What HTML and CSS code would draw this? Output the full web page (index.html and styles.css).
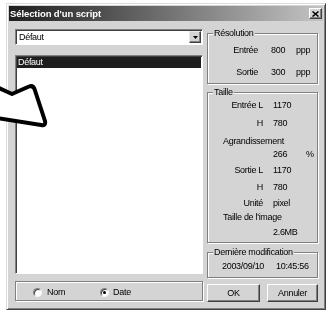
FILE: index.html
```html
<!DOCTYPE html>
<html lang="fr">
<head>
<meta charset="utf-8">
<title>Sélection d'un script</title>
<link rel="stylesheet" href="styles.css">
</head>
<body>
<div class="dialog">
  <div class="titlebar">
    <span class="title">Sélection d'un script</span>
    <span class="close"><svg width="7" height="6" viewBox="0 0 7 6"><path d="M0.5 0.5 L6.5 5.5 M6.5 0.5 L0.5 5.5" stroke="#000" stroke-width="1.5" fill="none"/></svg></span>
  </div>
  <div class="body">
    <div class="left">
      <div class="combo">
        <span class="combo-text">Défaut</span>
        <span class="drop"><svg width="5" height="3" viewBox="0 0 5 3"><path d="M0 0 H5 L2.5 3 Z" fill="#000"/></svg></span>
      </div>
      <div class="list">
        <div class="item sel">Défaut</div>
      </div>
      <div class="group radios">
        <span class="radio"><span class="rb"></span>Nom</span>
        <span class="radio"><span class="rb on"></span>Date</span>
      </div>
    </div>
    <div class="right">
      <div class="group res">
        <span class="legend">Résolution</span>
        <div class="row r1"><span class="lbl">Entrée</span><span class="val">800</span><span class="unit">ppp</span></div>
        <div class="row r2"><span class="lbl">Sortie</span><span class="val">300</span><span class="unit">ppp</span></div>
      </div>
      <div class="group taille">
        <span class="legend">Taille</span>
        <div class="row t1"><span class="lbl">Entrée L</span><span class="val">1170</span></div>
        <div class="row t2"><span class="lbl">H</span><span class="val">780</span></div>
        <div class="row t3 wide">Agrandissement</div>
        <div class="row t4"><span class="lbl"></span><span class="val">266</span><span class="unit">%</span></div>
        <div class="row t5"><span class="lbl">Sortie L</span><span class="val">1170</span></div>
        <div class="row t6"><span class="lbl">H</span><span class="val">780</span></div>
        <div class="row t7"><span class="lbl">Unité</span><span class="val">pixel</span></div>
        <div class="row t8 wide">Taille de l'image</div>
        <div class="row t9"><span class="lbl"></span><span class="val">2.6MB</span></div>
      </div>
      <div class="group modif">
        <span class="legend">Dernière modification</span>
        <div class="row m1"><span class="date">2003/09/10</span><span class="time">10:45:56</span></div>
      </div>
      <div class="buttons">
        <button class="btn ok">OK</button>
        <button class="btn cancel">Annuler</button>
      </div>
    </div>
  </div>
</div>
<svg class="arrow" width="60" height="140" viewBox="0 0 60 140">
  <path d="M-10 84 L12 94 L29 86.5 Q33 85 34.5 89 L45 121 Q46 126 41 125 L-10 117 Z" fill="#fff" stroke="#000" stroke-width="4" stroke-linejoin="round"/>
</svg>
</body>
</html>
```

FILE: styles.css
```css
html, body {
  margin: 0;
  padding: 0;
  background: #fff;
}
body {
  font-family: "Liberation Sans", Arial, sans-serif;
  font-size: 9px;
  letter-spacing: -0.3px;
  color: #000;
  position: relative;
}
.dialog {
  margin: 3px 0 0 6px;
  width: 320px;
  height: 307px;
  box-sizing: border-box;
  background: #d4d4d4;
  border: 1px solid;
  border-color: #dcdcdc #404040 #404040 #dcdcdc;
  box-shadow: inset 1px 1px #fff, inset -1px -1px #808080;
  padding: 2px;
  display: flex;
  flex-direction: column;
  filter: grayscale(1);
}
.titlebar {
  height: 15px;
  flex: none;
  background: linear-gradient(90deg, #1e1e1e, #c4c4c4);
  display: flex;
  align-items: center;
  justify-content: space-between;
  padding: 0 1px 0 1px;
}
.title {
  color: #fff;
  font-weight: bold;
  font-size: 9.5px;
  letter-spacing: -0.1px;
}
.close {
  width: 13px;
  height: 11px;
  box-sizing: border-box;
  background: #d4d4d4;
  border: 1px solid;
  border-color: #fff #404040 #404040 #fff;
  box-shadow: inset -1px -1px #808080;
  display: flex;
  align-items: center;
  justify-content: center;
}
.body {
  display: flex;
  gap: 4px;
  padding: 7px 0 0 6px;
}
.left {
  width: 188px;
  display: flex;
  flex-direction: column;
}
.right {
  width: 111px;
  display: flex;
  flex-direction: column;
}
.combo {
  margin-top: 1px;
  height: 16px;
  box-sizing: border-box;
  background: #fff;
  border: 1px solid;
  border-color: #808080 #fff #fff #808080;
  box-shadow: inset 1px 1px #404040;
  padding: 1px;
  display: flex;
  align-items: center;
}
.combo-text {
  flex: 1;
  padding-left: 2px;
  line-height: 12px;
}
.drop {
  width: 12px;
  height: 12px;
  box-sizing: border-box;
  background: #d4d4d4;
  border: 1px solid;
  border-color: #e8e8e8 #404040 #404040 #e8e8e8;
  box-shadow: inset -1px -1px #808080;
  display: flex;
  align-items: center;
  justify-content: center;
}
.list {
  margin-top: 10px;
  height: 219px;
  box-sizing: border-box;
  background: #fff;
  border: 1px solid;
  border-color: #808080 #fff #fff #808080;
  box-shadow: inset 1px 1px #404040;
  padding: 1px 1px 0 1px;
}
.item {
  height: 11px;
  line-height: 11px;
  padding-left: 1px;
}
.item.sel {
  background: #1e1e1e;
  color: #fff;
}
.group {
  border: 1px solid #808080;
  box-shadow: inset 1px 1px #fff, 1px 1px 0 #fff;
}
.legend {
  display: block;
  width: fit-content;
  margin: -6px 0 0 5px;
  padding: 0 1px;
  height: 11px;
  line-height: 11px;
  background: #d4d4d4;
}
.radios {
  margin-top: 7px;
  height: 20px;
  box-sizing: border-box;
  display: flex;
  align-items: center;
  padding: 2px 0 0 17px;
}
.radio {
  display: flex;
  align-items: center;
  line-height: 12px;
}
.radio + .radio {
  margin-left: 35px;
}
.rb {
  width: 9px;
  height: 9px;
  box-sizing: border-box;
  border-radius: 50%;
  background: #fff;
  border: 1px solid;
  border-color: #808080 #f4f4f4 #f4f4f4 #808080;
  box-shadow: inset 1px 1px #404040;
  margin-right: 5px;
  display: flex;
  align-items: center;
  justify-content: center;
}
.radio:last-child .rb {
  margin-right: 4px;
}
.rb.on::after {
  content: "";
  width: 3px;
  height: 3px;
  border-radius: 50%;
  background: #000;
}
.row {
  display: flex;
  height: 12px;
  line-height: 12px;
  white-space: nowrap;
}
.res {
  margin-top: 5px;
  padding-bottom: 5px;
}
.res .r1 { margin-top: 5px; }
.res .r2 { margin-top: 10px; }
.res .lbl { width: 50px; text-align: right; }
.res .val { margin-left: 13px; width: 25px; }
.taille {
  margin-top: 8px;
  padding-bottom: 4px;
}
.taille .lbl { width: 55px; text-align: right; }
.taille .val { margin-left: 10px; width: 33px; }
.taille .wide { padding-left: 15px; }
.t1 { margin-top: 1px; }
.t2 { margin-top: 6px; }
.t3 { margin-top: 6px; }
.t4 { margin-top: 1px; }
.t5 { margin-top: 4px; }
.t6 { margin-top: 5px; }
.t7 { margin-top: 4px; }
.t8 { margin-top: 2px; }
.t9 { margin-top: 3px; }
.modif {
  margin-top: 9px;
  padding-bottom: 5px;
}
.m1 {
  margin-top: 2px;
  padding-left: 14px;
}
.date { width: 54px; }
.buttons {
  display: flex;
  gap: 7px;
  margin-top: 6px;
}
.btn {
  height: 18px;
  padding: 0;
  margin: 0;
  font-family: inherit;
  font-size: 9px;
  letter-spacing: -0.3px;
  color: #000;
  background: #d4d4d4;
  border: 1px solid;
  border-color: #fff #404040 #404040 #fff;
  box-shadow: inset -1px -1px #808080;
}
.ok { width: 53px; }
.cancel { width: 51px; }
.arrow {
  position: absolute;
  left: 0;
  top: 0;
  pointer-events: none;
}
```
